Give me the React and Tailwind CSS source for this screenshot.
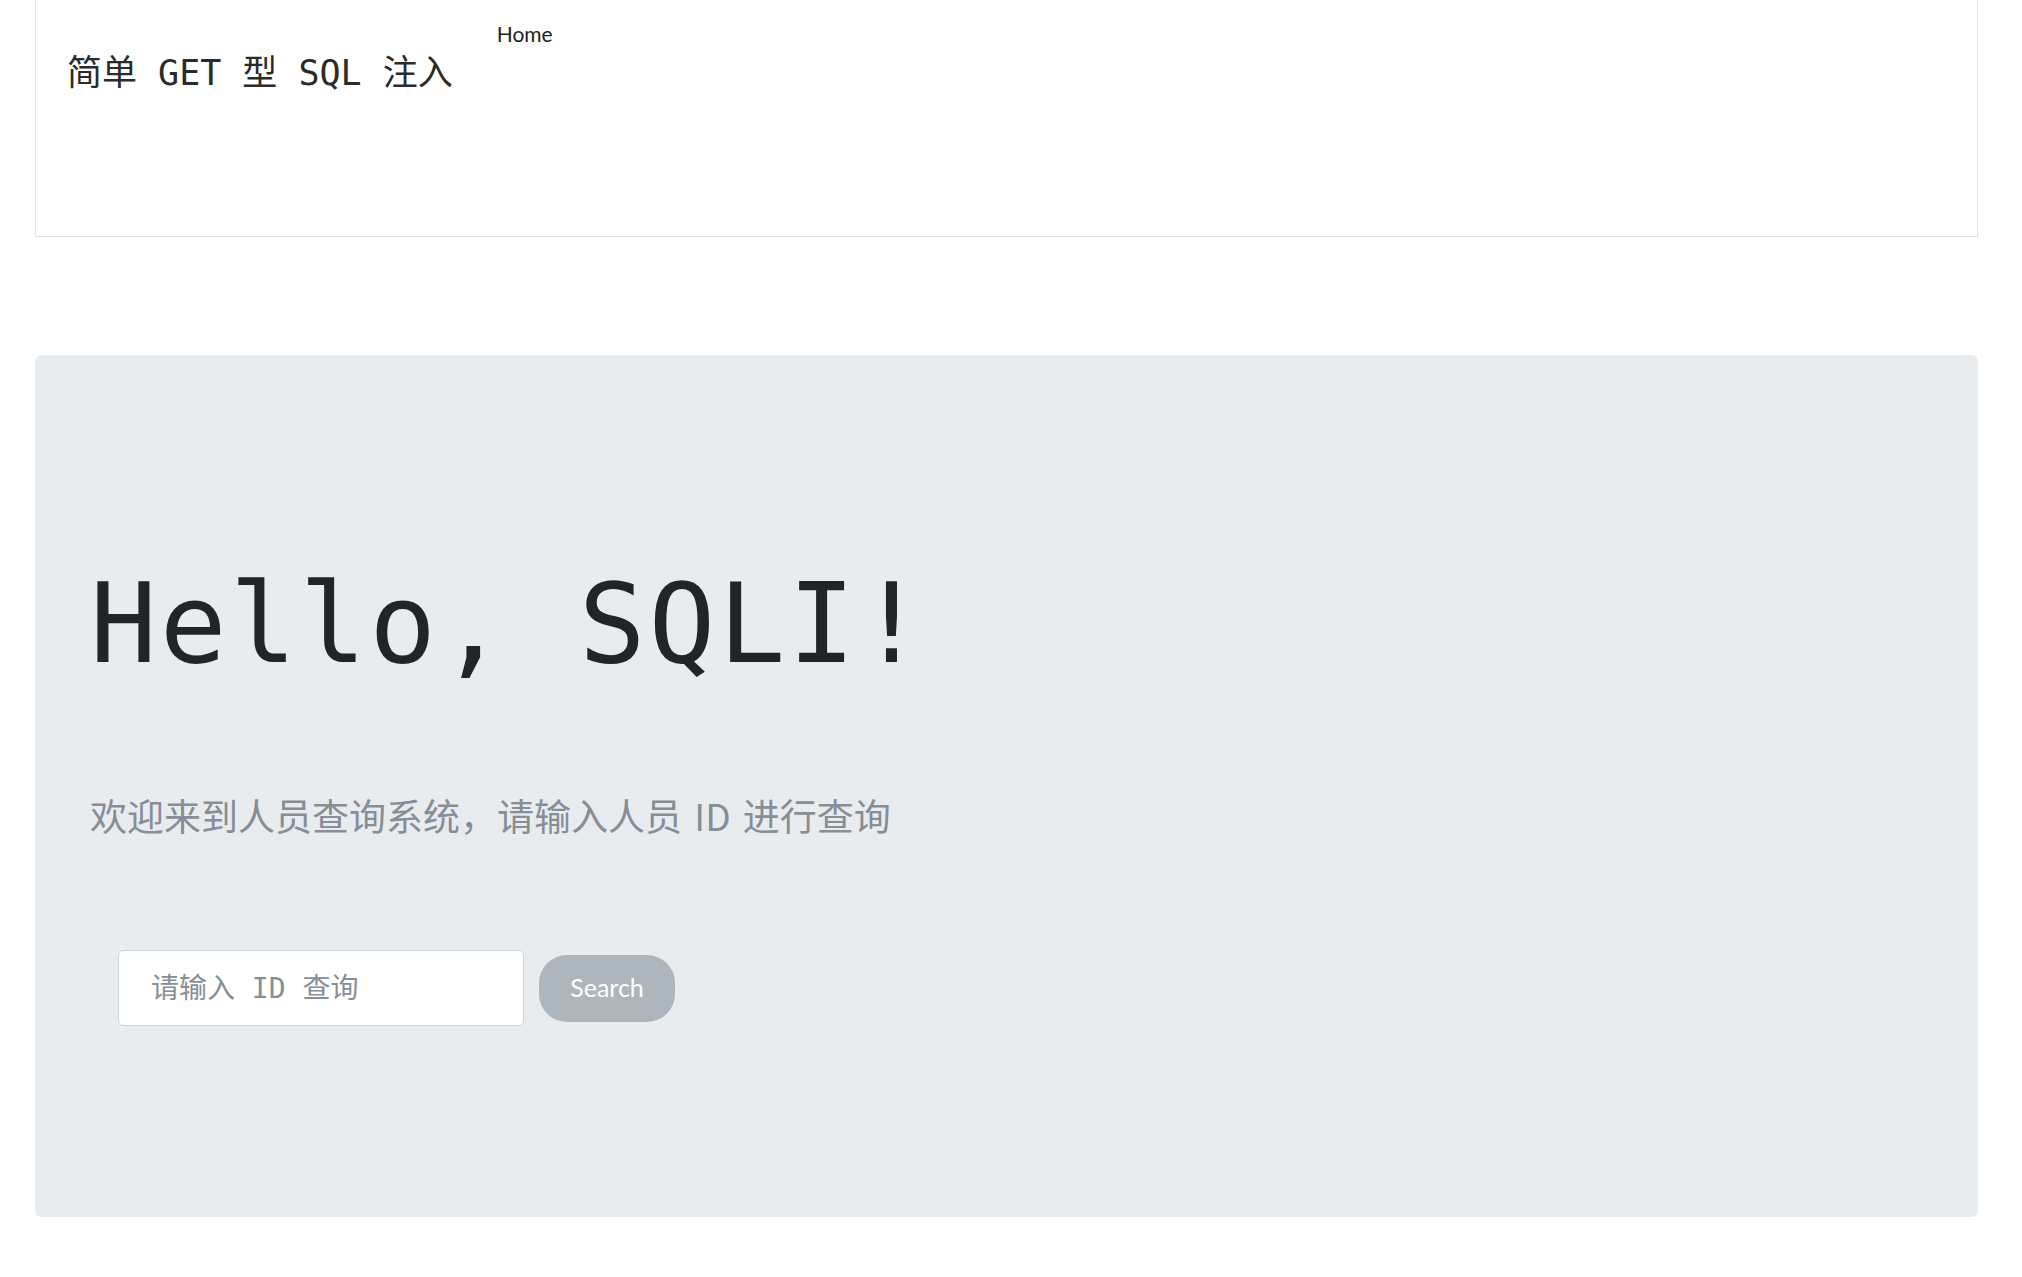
export default function App() {
  return (
    <div className="min-h-[1277px] w-[2022px] bg-white">
      <nav className="ml-[35px] flex h-[237px] w-[1943px] items-start border-x border-b border-[#e3e3e3] bg-white">
        <div className="pl-[31px] pt-[53px] text-[35px] leading-[40px] text-[#2b2b2b] [font-family:'DejaVu_Sans_Mono','Noto_Sans_CJK_SC',monospace]">
          简单 GET 型 SQL 注入
        </div>
        <a className="ml-[44px] pt-[22px] text-[21px] leading-[24px] text-[#222] [font-family:Lato,sans-serif]">Home</a>
      </nav>

      <section className="ml-[35px] mt-[118px] flex h-[862px] w-[1943px] flex-col items-start rounded-[6px] bg-[#e9ecef] pl-[55px]">
        <h1 className="pt-[203px] text-[111px] leading-[132px] tracking-[3px] text-[#212529] [font-family:'DejaVu_Sans_Mono',monospace]">
          Hello, SQLI!
        </h1>
        <p className="mt-[97px] text-[37px] leading-[56px] text-[#868e96] [word-spacing:4px] [font-family:'Noto_Sans_CJK_SC','Noto_Sans',sans-serif]">
          欢迎来到人员查询系统，请输入人员 ID 进行查询
        </p>
        <form className="ml-[28px] mt-[107px] flex items-center" onSubmit={(e) => e.preventDefault()}>
          <input
            type="text"
            placeholder="请输入 ID 查询"
            className="h-[76px] w-[406px] rounded-[5px] border border-[#ced4da] bg-white pl-[32px] text-[28px] text-[#495057] outline-none placeholder:text-[#868e96] [font-family:'DejaVu_Sans_Mono','Noto_Sans_CJK_SC',monospace]"
          />
          <button
            type="submit"
            className="ml-[15px] h-[67px] w-[136px] rounded-[28px] bg-[#adb5bd] text-[25px] text-white [font-family:Lato,sans-serif]"
          >
            Search
          </button>
        </form>
      </section>
    </div>
  );
}
